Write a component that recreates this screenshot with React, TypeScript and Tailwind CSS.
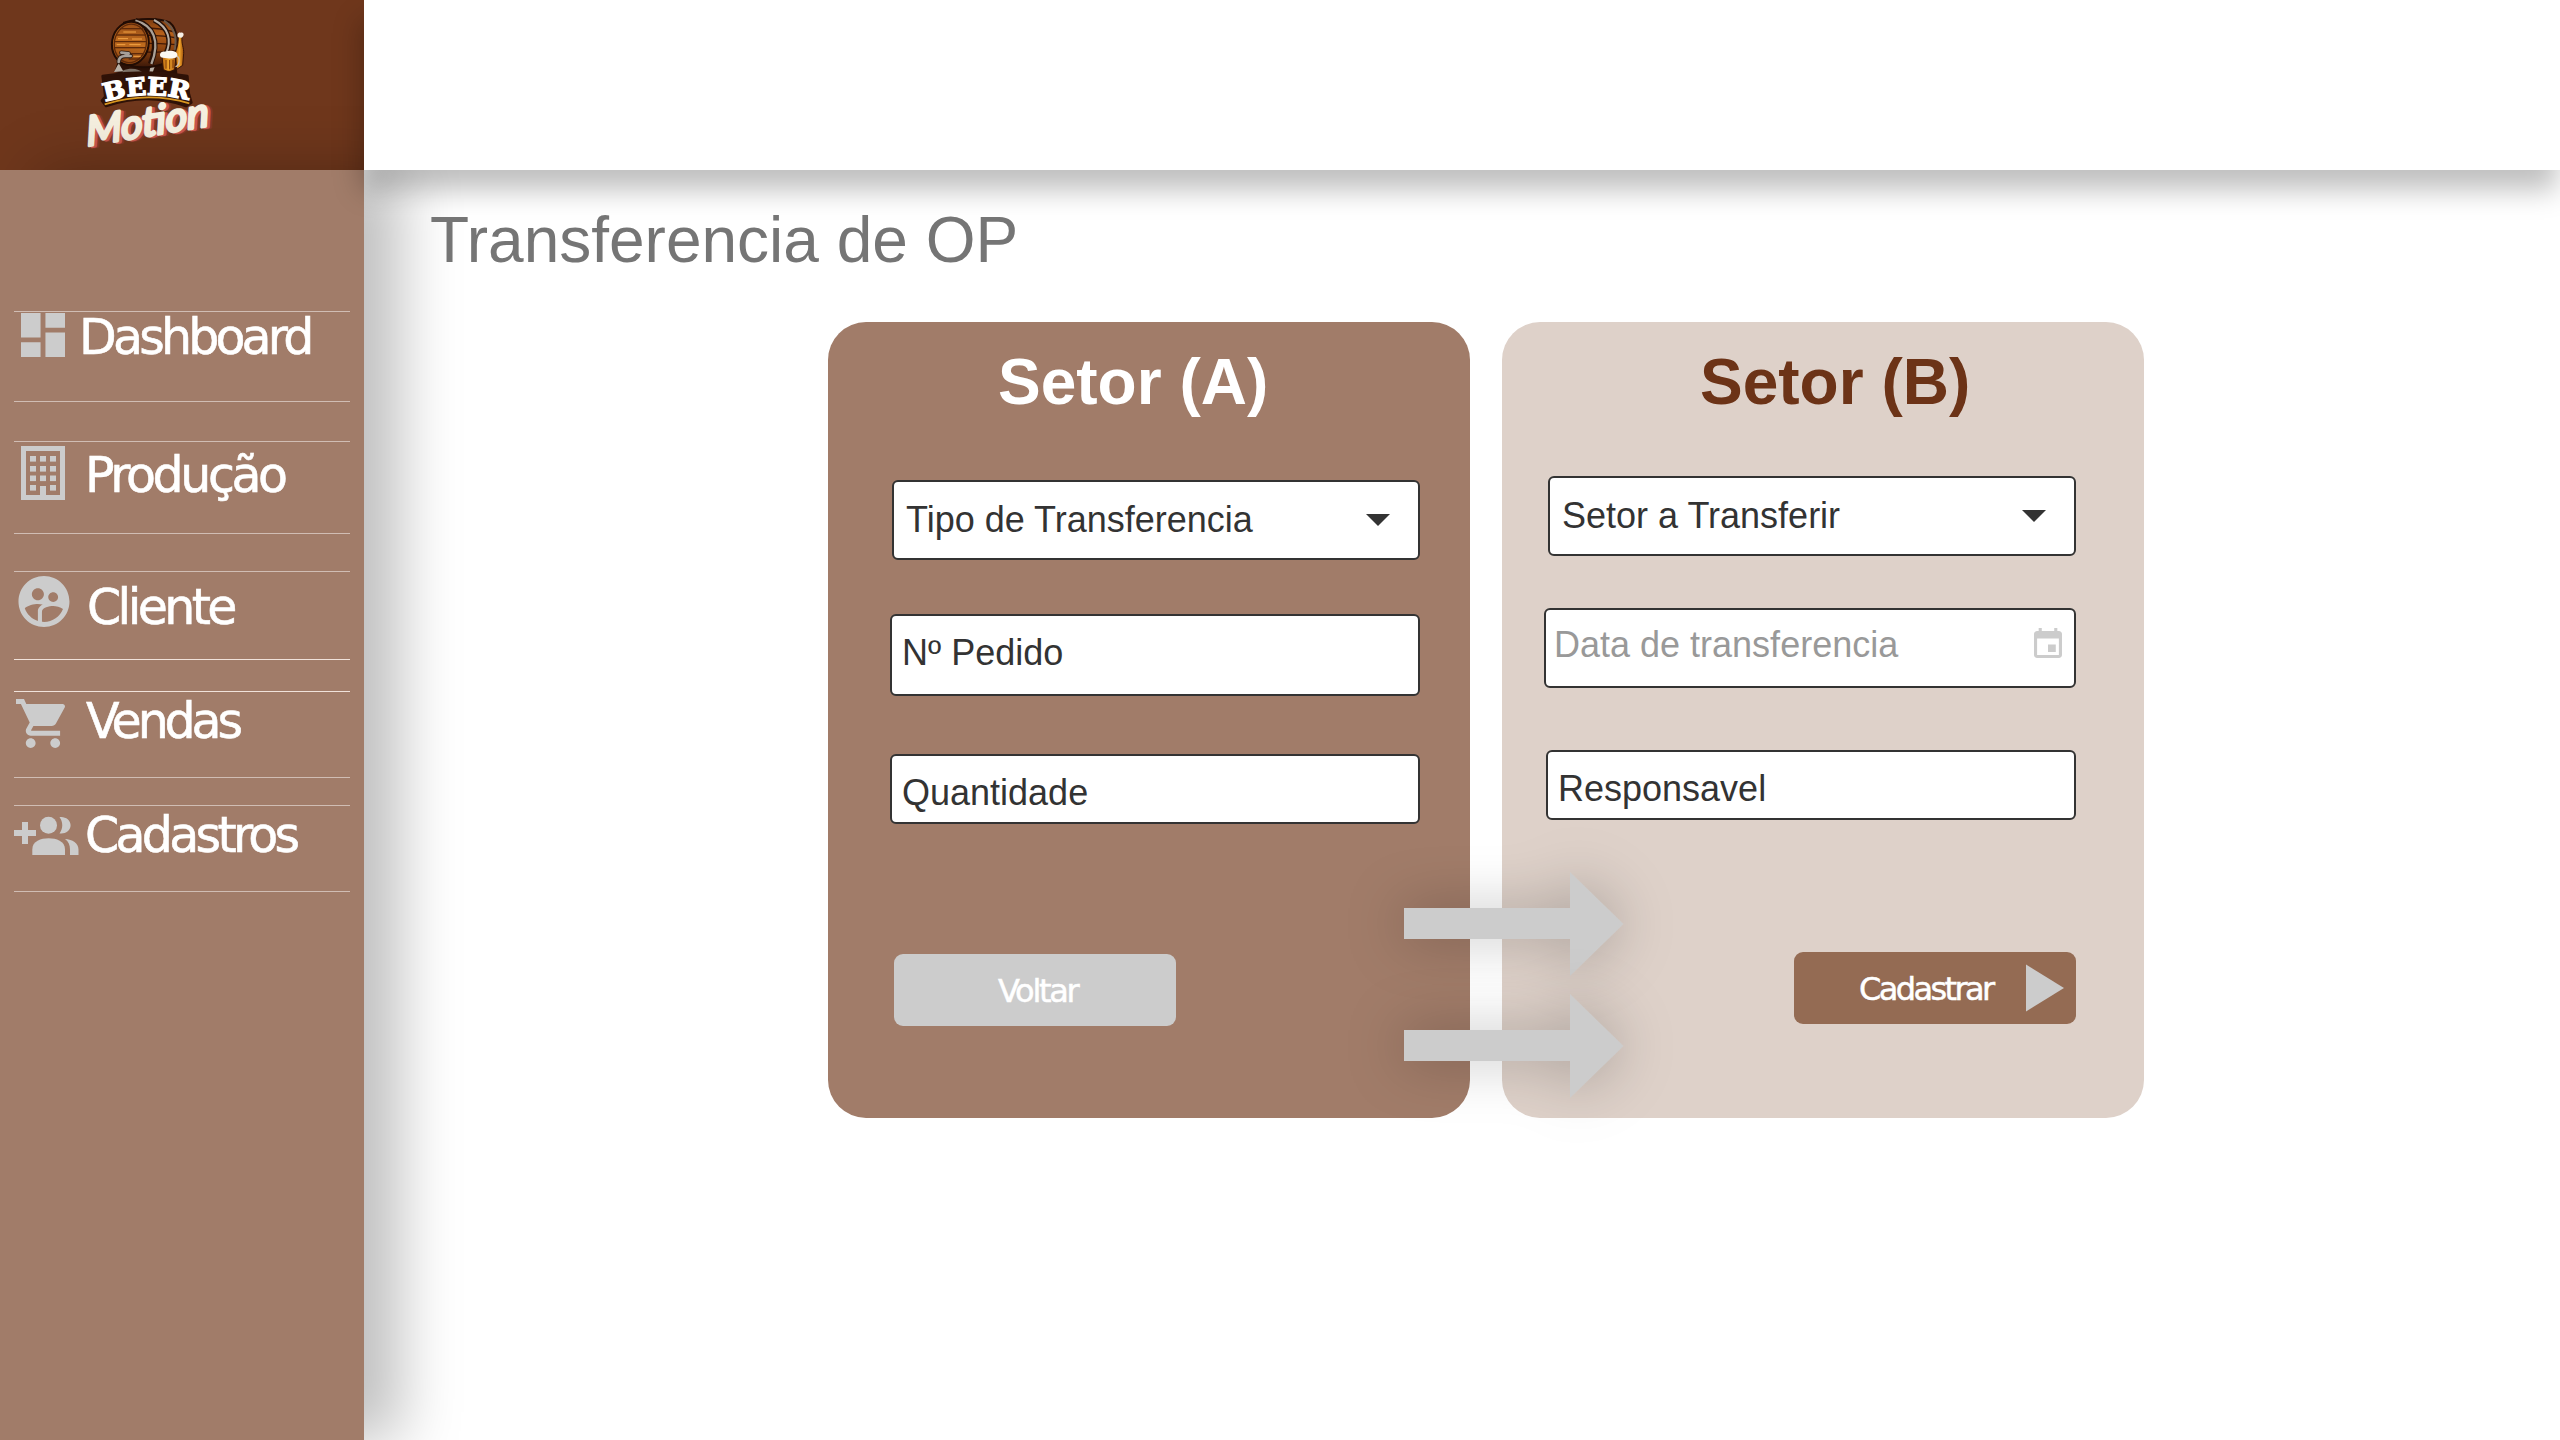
import React from "react";

const ICON = "#cccccc";

function Logo() {
  return (
    <svg className="ml-[60px] block h-[170px] w-[180px]" viewBox="0 0 540 510">
      <defs>
        <linearGradient id="wood" x1="0" y1="0" x2="0" y2="1">
          <stop offset="0" stopColor="#7a3a10" />
          <stop offset="0.3" stopColor="#b55f1a" />
          <stop offset="0.6" stopColor="#8f4512" />
          <stop offset="1" stopColor="#3c1808" />
        </linearGradient>
        <linearGradient id="face" x1="0" y1="0" x2="0" y2="1">
          <stop offset="0" stopColor="#964c17" />
          <stop offset="0.5" stopColor="#c06c1e" />
          <stop offset="1" stopColor="#8a4312" />
        </linearGradient>
        <linearGradient id="beer" x1="0" y1="0" x2="1" y2="0">
          <stop offset="0" stopColor="#b8660f" />
          <stop offset="0.5" stopColor="#f2a62c" />
          <stop offset="1" stopColor="#9c4d0b" />
        </linearGradient>
      </defs>
      {/* cradle */}
      <path d="M172 188 L163 216 L190 222 L352 222 L346 150 Z" fill="#2b1006" />
      <path d="M162 216 l14-26 14 24z M268 218 c4-32 18-48 40-50 l-12 16 c-10 8-14 22-18 34z" fill="#b9b0a6" />
      <path d="M188 212 c24-10 50-6 62 8 h-62z" fill="#7d7167" />
      {/* barrel */}
      <path d="M192 68 C230 54 300 52 330 68 C352 86 358 132 340 172 C320 198 250 208 214 198 Z" fill="url(#wood)" stroke="#210c04" strokeWidth="6" />
      <g fill="none" stroke="#421a07" strokeWidth="4">
        <path d="M252 84 C286 84 316 88 344 96" />
        <path d="M262 106 C294 106 324 108 350 114" />
        <path d="M264 130 C294 130 322 132 350 134" />
        <path d="M260 156 C290 158 316 156 342 152" />
      </g>
      <path d="M226 62 C278 76 300 122 272 192" fill="none" stroke="#261007" strokeWidth="17" />
      <path d="M226 62 C280 76 302 122 274 192" fill="none" stroke="#aaa198" strokeWidth="7" />
      <path d="M282 60 C326 82 336 122 318 160" fill="none" stroke="#261007" strokeWidth="15" />
      <path d="M282 60 C326 82 336 122 318 160" fill="none" stroke="#b8afa6" strokeWidth="6" />
      <path d="M312 62 C344 84 352 116 344 150" fill="none" stroke="#6c5a4c" strokeWidth="6" />
      <ellipse cx="211" cy="130" rx="55" ry="65" transform="rotate(10 211 130)" fill="url(#face)" stroke="#210c04" strokeWidth="6" />
      <ellipse cx="211" cy="130" rx="48" ry="58" transform="rotate(10 211 130)" fill="none" stroke="#5d290a" strokeWidth="4" />
      <g stroke="#5d290a" strokeWidth="4" fill="none">
        <path d="M180 86 H252" />
        <path d="M168 105 H258" />
        <path d="M164 125 H260" />
        <path d="M164 143 H258" />
        <path d="M210 161 H252" />
        <path d="M206 177 H240" />
      </g>
      <g stroke="#f3a445" strokeWidth="3" fill="none">
        <path d="M190 96 H228" />
        <path d="M174 116 H204 M216 117 H246" />
        <path d="M170 134 H196 M208 134 H242" />
        <path d="M220 169 H242" />
      </g>
      {/* tap */}
      <path d="M176 186 c0-14 8-18 20-18 h16 M184 158 l22 2 M197 160 v8" fill="none" stroke="#2b1a12" strokeWidth="13" strokeLinecap="round" />
      <path d="M176 186 c0-14 8-18 20-18 h16 M184 158 l22 2 M197 160 v8" fill="none" stroke="#a79f98" strokeWidth="8" strokeLinecap="round" />
      {/* bottle */}
      <path d="M355 108 L366 110 C364 134 372 142 371 160 L368 196 L350 208 L346 158 C350 146 355 134 355 108 Z" fill="url(#beer)" stroke="#3a1606" strokeWidth="3" />
      <path d="M354 112 c-4-8 0-16 8-14 c8-2 12 6 6 12 c-4 6-8 2-14 2z" fill="#f6efe6" />
      {/* mug */}
      <path d="M348 168 c14 0 12 32-4 32" fill="none" stroke="#cdbba6" strokeWidth="4" />
      <path d="M306 168 H348 L344 208 C334 216 320 216 310 208 Z" fill="url(#beer)" stroke="#3a1606" strokeWidth="3" />
      <path d="M318 180 v26 M329 180 v28 M339 180 v24" stroke="#7c3b0a" strokeWidth="3" />
      <path d="M303 172 c-8-10 2-20 12-17 c10-5 24-3 32 1 c8 5 6 16-1 17 c-14 4-30 3-43-1z" fill="#fbf8f3" />
      {/* wordmark */}
      <path id="beer-arc" d="M135 306 Q262 266 392 303" fill="none" />
      <path d="M128 228 Q258 208 382 228 L386 280 L394 308 L378 318 Q262 276 138 318 L126 302 L136 290 Z" fill="#2f1207" stroke="#2f1207" strokeWidth="8" strokeLinejoin="round" />
      <path d="M134 313 Q262 273 388 310" fill="none" stroke="#d8961f" strokeWidth="5" />
      <path d="M129 252 l8 3 M379 250 l8 10" stroke="#d8961f" strokeWidth="5" />
      <text fontFamily="'DejaVu Serif', serif" fontWeight="700" fontSize="74" fill="#ffffff" stroke="#ffffff" strokeWidth="4">
        <textPath href="#beer-arc" textLength="254" lengthAdjust="spacingAndGlyphs">BEER</textPath>
      </text>
      <g transform="translate(82 440) rotate(-9.5) skewX(-6)" fontFamily="Lato, sans-serif" fontStyle="italic" fontWeight="400" fontSize="122" strokeLinejoin="round" strokeLinecap="round" strokeWidth="9">
        <text x="15" y="4" textLength="372" lengthAdjust="spacingAndGlyphs" fill="#7f3a2c" stroke="#7f3a2c">Motion</text>
        <text x="8" y="2" textLength="372" lengthAdjust="spacingAndGlyphs" fill="#c9574e" stroke="#c9574e">Motion</text>
        <text x="0" y="-2" textLength="372" lengthAdjust="spacingAndGlyphs" fill="#f6f0e0" stroke="#f6f0e0">Motion</text>
      </g>
    </svg>
  );
}

function DashboardIcon() {
  return (
    <svg className="ml-[7px] mt-px block h-[44px] w-[44px]" viewBox="3 3 18 18" fill={ICON}>
      <path d="M3 13h8V3H3v10zm0 8h8v-6H3v6zm10 0h8V11h-8v10zm0-18v6h8V3h-8z" />
    </svg>
  );
}

function BuildingIcon() {
  const cols = [9, 19, 29];
  const rows = [10, 20, 29.5, 39];
  return (
    <svg className="ml-[7px] mt-[4px] block h-[54px] w-[44px]" viewBox="0 0 44 54" fill={ICON}>
      <path fillRule="evenodd" d="M0 0H44V54H0Z M5 5V49H19V40H25V49H39V5Z" />
      {rows.map((y) =>
        cols
          .filter((x) => !(x === 19 && y === 39))
          .map((x) => <rect key={`${x}-${y}`} x={x} y={y} width="6" height="5.6" />)
      )}
    </svg>
  );
}

function ClientIcon() {
  return (
    <svg className="ml-[4px] mt-[4px] block h-[51px] w-[52px]" viewBox="2 2 20 20" fill={ICON}>
      <path d="M11.99 2c-5.52 0-10 4.48-10 10s4.48 10 10 10 10-4.48 10-10-4.48-10-10-10zm3.61 6.34c1.07 0 1.93.86 1.93 1.93 0 1.07-.86 1.93-1.93 1.93-1.07 0-1.93-.86-1.93-1.93-.01-1.07.86-1.93 1.93-1.93zm-6-1.58c1.3 0 2.36 1.06 2.36 2.36 0 1.3-1.06 2.36-2.36 2.36-1.3 0-2.36-1.06-2.36-2.36 0-1.31 1.05-2.36 2.36-2.36zm0 9.13v3.75c-2.4-.75-4.3-2.6-5.14-4.96 1.05-1.12 3.67-1.69 5.14-1.69.53 0 1.2.08 1.9.22-1.64.87-1.9 2.02-1.9 2.68zM11.99 20c-.27 0-.53-.01-.79-.04v-4.07c0-1.42 2.94-2.13 4.4-2.13 1.07 0 2.92.39 3.84 1.15-1.17 2.97-4.06 5.09-7.45 5.09z" />
    </svg>
  );
}

function CartIcon() {
  return (
    <svg className="ml-[2px] mt-[7px] block h-[49px] w-[49px]" viewBox="1 2 20 20" fill={ICON}>
      <path d="M7 18c-1.1 0-1.99.9-1.99 2S5.9 22 7 22s2-.9 2-2-.9-2-2-2zM1 2v2h2l3.6 7.59-1.35 2.45c-.16.28-.25.61-.25.96 0 1.1.9 2 2 2h12v-2H7.42c-.14 0-.25-.11-.25-.25l.03-.12.9-1.63h7.45c.75 0 1.41-.41 1.75-1.03l3.58-6.49c.08-.14.12-.31.12-.48 0-.55-.45-1-1-1H5.21l-.94-2H1zm16 16c-1.1 0-1.99.9-1.99 2s.89 2 1.99 2 2-.9 2-2-.9-2-2-2z" />
    </svg>
  );
}

function AddUsersIcon() {
  return (
    <svg className="mt-[10px] block h-[40px] w-[65px]" viewBox="0 0 65 40" fill={ICON}>
      <path d="M8 6h6v8h8v6h-8v8H8v-8H0v-6h8z" />
      <circle cx="34.5" cy="9.3" r="8.5" />
      <path d="M18.3 39V33.5C18.3 25 27 22.3 34.6 22.3S51 25 51 33.5V39Z" />
      <path d="M45.5 1.2C51 .2 56.6 4 56.6 9.3S51 18.4 45.5 17.4C49.2 12.5 49.2 6 45.5 1.2Z" />
      <path d="M51 23C58.500 23.500 64.500 27 64.500 33.500V39H56V33.500C56 29 54.500 25.500 51 23Z" />
    </svg>
  );
}

type NavItemProps = { icon: React.ReactNode; label: string; box: string; text: string };

function NavItem({ icon, label, box, text }: NavItemProps) {
  return (
    <a className={`mx-[14px] flex w-[336px] items-start border-y ${box}`}>
      <span className="w-[64px] shrink-0">{icon}</span>
      <span className={`whitespace-nowrap text-[49px] leading-[49px] text-white [-webkit-text-stroke:0.6px_white] ${text}`}>{label}</span>
    </a>
  );
}

const sans = "font-['Liberation_Sans',Arial,sans-serif]";
const humanist = "font-['DejaVu_Sans',sans-serif]";

function Caret({ className }: { className: string }) {
  return (
    <svg className={`block h-[12px] w-[24px] ${className}`} viewBox="0 0 24 12">
      <path d="M0 0H24L12 12Z" fill="#333333" />
    </svg>
  );
}

function Field({ className, text, children, label }: { className: string; text: string; label: string; children?: React.ReactNode }) {
  return (
    <div className={`flex items-start justify-between rounded-[6px] border-2 border-[#333333] bg-white text-[36px] leading-[36px] ${className}`}>
      <span className={`whitespace-nowrap ${text}`}>{label}</span>
      {children}
    </div>
  );
}

function Arrow({ className }: { className: string }) {
  return (
    <svg className={`absolute overflow-visible drop-shadow-[0_0_28px_rgba(0,0,0,0.25)] ${className}`} width="220" height="104" viewBox="0 0 220 104">
      <path d="M0 36H166V0L219.500 52L166 104V67H0Z" fill={ICON} />
    </svg>
  );
}

export default function App() {
  return (
    <div className="relative flex h-[1440px] w-[2560px] overflow-hidden bg-white">
      <aside className="flex w-[364px] shrink-0 flex-col">
        <div className="h-[170px] bg-[#6f371c]">
          <Logo />
        </div>
        <nav className={`relative z-10 flex-1 bg-[#a17c69] pt-[141px] shadow-[36px_0_56px_rgba(0,0,0,0.25)] ${humanist}`}>
          <NavItem icon={<DashboardIcon />} label="Dashboard" box="h-[91px] border-[#d0bdb4]" text="ml-px mt-px tracking-[-3.8px]" />
          <NavItem icon={<BuildingIcon />} label="Produção" box="mt-[39px] h-[93px] border-[#d0bdb4]" text="ml-[7px] mt-[9px] tracking-[-3.4px]" />
          <NavItem icon={<ClientIcon />} label="Cliente" box="mt-[37px] h-[89px] border-t-[#d0bdb4] border-b-[#f0e2da]" text="ml-[9px] mt-[11px] tracking-[-3.6px]" />
          <NavItem icon={<CartIcon />} label="Vendas" box="mt-[31px] h-[87px] border-t-[#f0e2da] border-b-[#d0bdb4]" text="ml-[8px] mt-[5px] tracking-[-4.1px]" />
          <NavItem icon={<AddUsersIcon />} label="Cadastros" box="mt-[27px] h-[87px] border-[#d0bdb4]" text="ml-[7px] mt-[5px] tracking-[-3.7px]" />
        </nav>
      </aside>

      <div className={`flex flex-1 flex-col ${sans}`}>
        <header className="relative z-20 h-[170px] shrink-0 bg-white shadow-[-3px_20px_26px_rgba(0,0,0,0.25)]" />
        <main className="relative z-30 flex-1 pt-[38px]">
          <h1 className="ml-[66px] text-[64px] leading-[64px] text-[#757575]">Transferencia de OP</h1>

          <div className="relative ml-[464px] mt-[50px] flex w-[1316px] gap-8 text-[#333333]">
            <section className="h-[796px] w-[642px] rounded-[38px] bg-[#a17c69] pt-[28px]">
              <h2 className="pl-[170px] text-[64px] font-bold leading-[64px] text-white">Setor (A)</h2>
              <Field className="ml-[64px] mt-[66px] h-[80px] w-[528px]" text="ml-[12px] mt-[20px]" label="Tipo de Transferencia">
                <Caret className="mr-[28px] mt-[32px]" />
              </Field>
              <Field className="ml-[62px] mt-[54px] h-[82px] w-[530px]" text="ml-[10px] mt-[19px]" label="Nº Pedido" />
              <Field className="ml-[62px] mt-[58px] h-[70px] w-[530px]" text="ml-[10px] mt-[19px]" label="Quantidade" />
              <button className={`ml-[66px] mt-[130px] flex h-[72px] w-[282px] items-start rounded-[9px] bg-[#cccccc] pl-[104px] pt-[21px] text-[32px] leading-[32px] tracking-[-2.3px] text-white [-webkit-text-stroke:0.5px_white] ${humanist}`}>
                Voltar
              </button>
            </section>

            <section className="h-[796px] w-[642px] rounded-[38px] bg-[#ded1c9] pt-[28px]">
              <h2 className="pl-[198px] text-[64px] font-bold leading-[64px] text-[#6c3317]">Setor (B)</h2>
              <Field className="ml-[46px] mt-[62px] h-[80px] w-[528px]" text="ml-[12px] mt-[20px]" label="Setor a Transferir">
                <Caret className="mr-[28px] mt-[32px]" />
              </Field>
              <Field className="ml-[42px] mt-[52px] h-[80px] w-[532px] text-[#999999]" text="ml-[8px] mt-[17px]" label="Data de transferencia">
                <svg className="mr-[12px] mt-[18px] block h-[30px] w-[28px]" viewBox="3 1 18 20" preserveAspectRatio="none" fill={ICON}>
                  <path d="M17 12h-5v5h5v-5zM16 1v2H8V1H6v2H5c-1.110 0-1.990.9-1.990 2L3 19c0 1.100.890 2 2 2h14c1.100 0 2-.9 2-2V5c0-1.100-.9-2-2-2h-1V1h-2zm3 18H5V8h14v11z" />
                </svg>
              </Field>
              <Field className="ml-[44px] mt-[62px] h-[70px] w-[530px]" text="ml-[10px] mt-[19px]" label="Responsavel" />
              <button className={`ml-[292px] mt-[132px] flex h-[72px] w-[282px] items-start justify-between rounded-[9px] bg-[#946b53] pl-[65px] pr-[12px] text-[32px] leading-[32px] text-white ${humanist}`}>
                <span className="mt-[21px] tracking-[-2.6px] [-webkit-text-stroke:0.5px_white]">Cadastrar</span>
                <svg className="mt-[12px] block h-[48px] w-[38px]" viewBox="0 0 38 48" fill={ICON}>
                  <path d="M0 0.500L38 24L0 47.500Z" />
                </svg>
              </button>
            </section>

            <Arrow className="left-[576px] top-[550px]" />
            <Arrow className="left-[576px] top-[671.5px]" />
          </div>
        </main>
      </div>
    </div>
  );
}
